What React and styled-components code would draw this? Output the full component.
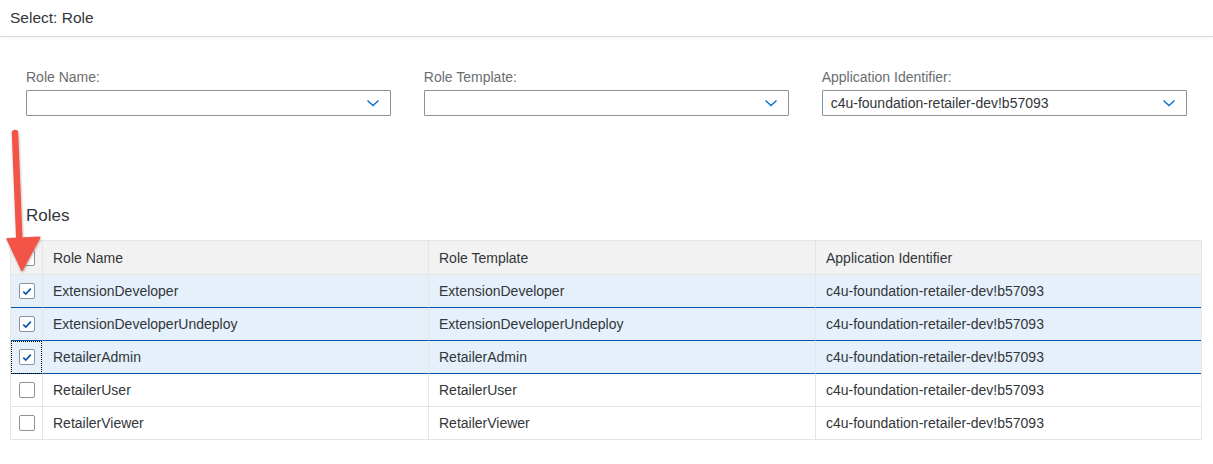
import React from "react";
import styled, { createGlobalStyle } from "styled-components";

const Global = createGlobalStyle`
  html, body { margin: 0; padding: 0; background: #fff; }
  body { font-family: "Liberation Sans", Arial, sans-serif; color: #32363a; }
  * { box-sizing: border-box; }
`;

const Page = styled.div`
  position: relative;
  width: 1213px;
  height: 464px;
  background: #fff;
  overflow: hidden;
`;

const TitleBar = styled.div`
  height: 37px;
  padding-left: 10px;
  display: flex;
  align-items: center;
  font-size: 15.5px;
  color: #32363a;
  border-bottom: 1px solid #d9d9d9;
  box-shadow: 0 1px 3px rgba(0, 0, 0, 0.06);
`;

const Filters = styled.div`
  display: grid;
  grid-template-columns: repeat(3, 1fr);
  column-gap: 32.5px;
  padding: 32px 26px 0 26px;
`;

const Field = styled.div`
  display: flex;
  flex-direction: column;
`;

const Label = styled.label`
  font-size: 14px;
  line-height: 16px;
  color: #6a6d70;
  margin-bottom: 5px;
`;

const Select = styled.div`
  height: 26px;
  border: 1px solid #89919a;
  border-radius: 1px;
  background: #fff;
  display: flex;
  align-items: center;
  padding: 0 10px 0 8px;
  font-size: 14px;
  color: #32363a;
`;

const SelectValue = styled.span`
  flex: 1;
`;

const Chevron = () => (
  <svg width="14" height="10" viewBox="0 0 14 10">
    <path d="M1.5 2.5 L7 7.5 L12.5 2.5" fill="none" stroke="#0a6ed1" strokeWidth="1.4" />
  </svg>
);

const SectionTitle = styled.h2`
  margin: 90px 0 0 26px;
  font-weight: normal;
  font-size: 17px;
  line-height: 20px;
  color: #32363a;
`;

const Table = styled.div`
  margin: 14px 11px 0 10px;
  border: 1px solid #e5e5e5;
  border-bottom: none;
  display: grid;
  grid-template-columns: 32px 386px 387px 1fr;
`;

const Cell = styled.div`
  height: ${(p) => (p.$header ? 34 : 33)}px;
  display: flex;
  align-items: center;
  padding-left: ${(p) => (p.$select ? 0 : 10)}px;
  justify-content: ${(p) => (p.$select ? "center" : "flex-start")};
  font-size: 14px;
  color: #32363a;
  background: ${(p) => (p.$header ? "#f2f2f2" : p.$selected ? "#e5f0fa" : "#fff")};
  border-right: ${(p) => (p.$last ? "none" : "1px solid #e5e5e5")};
  border-bottom: 1px solid ${(p) => (p.$selected ? "#0854a0" : "#e5e5e5")};
  position: relative;
  ${(p) =>
    p.$focus &&
    `&::after { content: ""; position: absolute; inset: 0 0 -1px 0; border: 1px dotted #000; pointer-events: none; }`}
`;

const Box = styled.span`
  width: 16px;
  height: 16px;
  border: 1px solid #89919a;
  border-radius: 2px;
  background: #fff;
  display: inline-flex;
  align-items: center;
  justify-content: center;
`;

const Check = () => (
  <svg width="10" height="9" viewBox="0 0 10 9">
    <path d="M1.3 4.6 L3.8 7 L8.8 1.6" fill="none" stroke="#0854a0" strokeWidth="1.6" />
  </svg>
);

const ArrowLayer = styled.svg`
  position: absolute;
  left: 0;
  top: 125px;
  pointer-events: none;
`;

const rows = [
  { name: "ExtensionDeveloper", sel: true },
  { name: "ExtensionDeveloperUndeploy", sel: true },
  { name: "RetailerAdmin", sel: true, focus: true },
  { name: "RetailerUser", sel: false },
  { name: "RetailerViewer", sel: false },
];

const APP_ID = "c4u-foundation-retailer-dev!b57093";

export default function App() {
  return (
    <Page>
      <Global />
      <TitleBar>Select: Role</TitleBar>
      <Filters>
        <Field>
          <Label>Role Name:</Label>
          <Select>
            <SelectValue />
            <Chevron />
          </Select>
        </Field>
        <Field>
          <Label>Role Template:</Label>
          <Select>
            <SelectValue />
            <Chevron />
          </Select>
        </Field>
        <Field>
          <Label>Application Identifier:</Label>
          <Select>
            <SelectValue>{APP_ID}</SelectValue>
            <Chevron />
          </Select>
        </Field>
      </Filters>
      <SectionTitle>Roles</SectionTitle>
      <Table>
        <Cell $header $select>
          <Box />
        </Cell>
        <Cell $header>Role Name</Cell>
        <Cell $header>Role Template</Cell>
        <Cell $header $last>Application Identifier</Cell>
        {rows.map((r) => (
          <React.Fragment key={r.name}>
            <Cell $select $selected={r.sel} $focus={r.focus}>
              <Box>{r.sel && <Check />}</Box>
            </Cell>
            <Cell $selected={r.sel}>{r.name}</Cell>
            <Cell $selected={r.sel}>{r.name}</Cell>
            <Cell $selected={r.sel} $last>
              {APP_ID}
            </Cell>
          </React.Fragment>
        ))}
      </Table>
      <ArrowLayer width="60" height="160" viewBox="0 0 60 160">
        <defs>
          <filter id="sh" x="-50%" y="-20%" width="200%" height="140%">
            <feDropShadow dx="0.5" dy="1" stdDeviation="1.2" floodColor="#000" floodOpacity="0.3" />
          </filter>
        </defs>
        <g filter="url(#sh)">
          <path d="M15 8 L19.5 118" stroke="#f25447" strokeWidth="6.5" strokeLinecap="round" fill="none" />
          <path d="M7.5 114 L39.5 112.5 L22 145 Z" fill="#f25447" stroke="#f25447" strokeWidth="2" strokeLinejoin="round" />
        </g>
      </ArrowLayer>
    </Page>
  );
}
